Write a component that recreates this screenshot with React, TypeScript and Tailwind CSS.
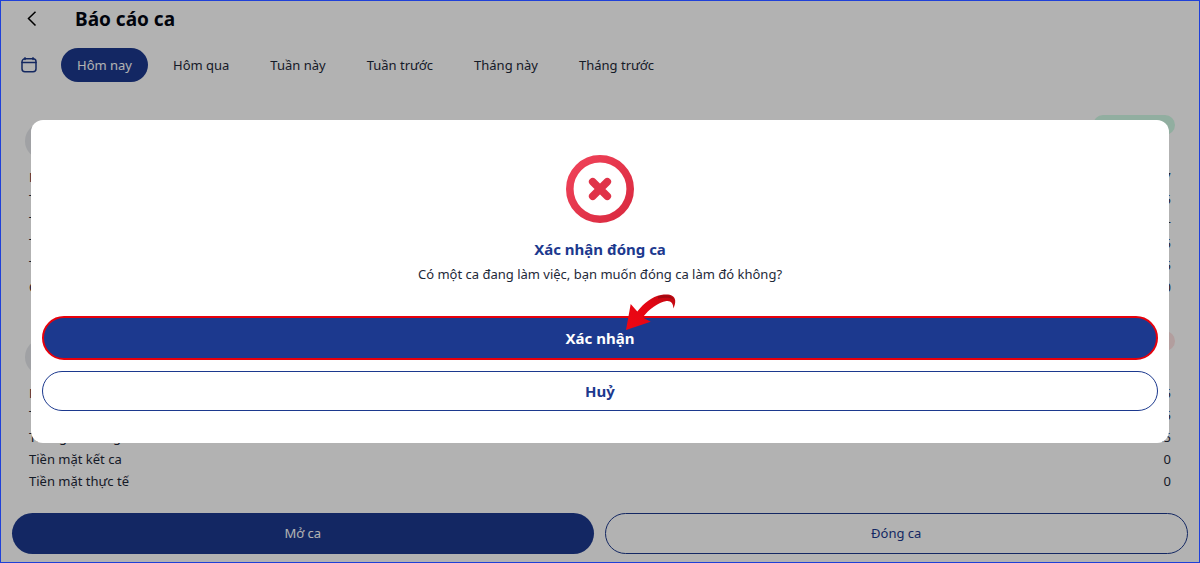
import React from "react";

type Row = { label: string; value: string };

const tabs = ["Hôm nay", "Hôm qua", "Tuần này", "Tuần trước", "Tháng này", "Tháng trước"];

const firstShift: Row[] = [
  { label: "Nhân viên", value: "7" },
  { label: "Thời gian mở ca", value: "5" },
  { label: "Tiền đầu ca", value: "-" },
  { label: "Tiền mặt", value: "5" },
  { label: "Tổng doanh thu", value: "5" },
  { label: "Còn lại", value: "0" },
];

const secondShift: Row[] = [
  { label: "Nhân viên", value: "5" },
  { label: "Thời gian mở ca", value: "5" },
  { label: "Thời gian đóng ca", value: "25" },
  { label: "Tiền mặt kết ca", value: "0" },
  { label: "Tiền mặt thực tế", value: "0" },
];

function ShiftCard({ rows, badgeClass }: { rows: Row[]; badgeClass: string }) {
  return (
    <section>
      <div className="flex h-[52px] items-start justify-between px-[25px]">
        <span className="mt-2 size-9 rounded-full bg-gray-200" />
        <span className={badgeClass} />
      </div>
      <dl className="px-[29px]">
        {rows.map((row) => (
          <div key={row.label} className="flex h-[22px] items-center justify-between">
            <dt>{row.label}</dt>
            <dd>{row.value}</dd>
          </div>
        ))}
      </dl>
    </section>
  );
}

function CalendarIcon() {
  return (
    <svg className="size-4" viewBox="0 0 16 16" fill="none" stroke="#1e3a8a" strokeWidth="1.5" strokeLinecap="round" aria-hidden="true">
      <rect x="1" y="1.800" width="14" height="13" rx="3" />
      <path d="M1 5.500h14M4 .8v1.600M12 .8v1.600" />
    </svg>
  );
}

function ErrorIcon() {
  return (
    <svg className="size-[68px]" viewBox="0 0 68 68" fill="none" aria-hidden="true">
      <defs>
        <linearGradient id="ring" x1="0" y1="0" x2="1" y2="1">
          <stop offset="0" stopColor="#f04359" />
          <stop offset="1" stopColor="#d9293f" />
        </linearGradient>
      </defs>
      <circle cx="34" cy="34" r="30.2" stroke="url(#ring)" strokeWidth="7.6" />
      <path d="M26.700 26.700l14.600 14.600M41.300 26.700L26.700 41.300" stroke="#e03349" strokeWidth="7.6" strokeLinecap="round" />
    </svg>
  );
}

function Arrow() {
  return (
    <svg className="pointer-events-none absolute bottom-7 left-1/2 ml-6 h-10 w-14" viewBox="0 0 56 40" aria-hidden="true">
      <defs>
        <linearGradient id="arrow" x1="0" y1="1" x2="1" y2="0">
          <stop offset="0" stopColor="#ee0713" />
          <stop offset="0.6" stopColor="#e30613" />
          <stop offset="1" stopColor="#b80a12" />
        </linearGradient>
      </defs>
      <path
        d="M2 38L6.700 12L13.300 19.500C20 11 28 4.500 37 3C45 1.700 50.500 3 51.200 8.500C51.400 11 50.700 14 49.300 16.500C49.500 11.500 47 8.500 42.500 9C34 10.500 25 17 18.700 25.500L26.700 29.700Z"
        fill="url(#arrow)"
      />
      <path d="M34 4C41 2.200 48 3.200 49.500 7.500C47 5.500 42 5 34 6.500Z" fill="#7d0910" opacity="0.5" />
    </svg>
  );
}

export default function App() {
  return (
    <div className="relative flex min-h-screen flex-col bg-white font-['Noto_Sans','Liberation_Sans',sans-serif] text-[13px] text-gray-800">
      <header className="flex h-[38px] items-center px-6">
        <button type="button" aria-label="Quay lại" className="flex size-4 items-center justify-center text-black">
          <svg className="size-4" viewBox="0 0 16 16" fill="none" stroke="currentColor" strokeWidth="1.500" aria-hidden="true">
            <path d="M11.500 .8L4.500 7.500L11.500 14.500" />
          </svg>
        </button>
        <h1 className="ml-[35px] text-[19px] font-bold text-gray-950">Báo cáo ca</h1>
      </header>

      <nav className="flex items-center px-[21px] pt-[10px]">
        <button type="button" aria-label="Chọn ngày">
          <CalendarIcon />
        </button>
        <div className="ml-6 flex gap-[9px]">
          {tabs.map((tab, i) => (
            <button
              key={tab}
              type="button"
              className={
                i === 0
                  ? "h-[34px] rounded-full bg-blue-900 px-4 pt-[2px] text-white"
                  : "h-[34px] rounded-full px-4 pt-[2px]"
              }
            >
              {tab}
            </button>
          ))}
        </div>
      </nav>

      <main className="flex flex-col gap-8 pt-[33px]">
        <ShiftCard rows={firstShift} badgeClass="h-5 w-[82px] rounded-full bg-emerald-100" />
        <ShiftCard rows={secondShift} badgeClass="h-5 w-[82px] rounded-full bg-red-100" />
      </main>

      <footer className="mt-auto flex gap-[11px] px-3 pb-[9px]">
        <button type="button" className="h-[41px] flex-1 rounded-full bg-blue-900 text-white">
          Mở ca
        </button>
        <button type="button" className="h-[41px] flex-1 rounded-full border border-blue-900 text-blue-900">
          Đóng ca
        </button>
      </footer>

      <div className="absolute inset-0 flex items-center bg-black/30 px-[31px]">
        <div
          role="dialog"
          aria-modal="true"
          aria-labelledby="dialog-title"
          className="flex w-full flex-col items-center rounded-xl bg-white px-[11px] pt-[35px] pb-8"
        >
          <ErrorIcon />
          <h2 id="dialog-title" className="mt-[14px] text-[15px] leading-6 font-bold text-blue-900">
            Xác nhận đóng ca
          </h2>
          <p className="leading-[26px]">Có một ca đang làm việc, bạn muốn đóng ca làm đó không?</p>
          <div className="relative mt-[29px] flex w-full">
            <button
              type="button"
              className="h-11 w-full rounded-full border-2 border-red-600 bg-blue-900 text-[15px] font-bold text-white"
            >
              Xác nhận
            </button>
            <Arrow />
          </div>
          <button
            type="button"
            className="mt-[11px] h-10 w-full rounded-full border border-blue-900 text-[15px] font-bold text-blue-900"
          >
            Huỷ
          </button>
        </div>
      </div>
      <div className="pointer-events-none absolute inset-0 border border-[#1f40d8]" />
    </div>
  );
}
